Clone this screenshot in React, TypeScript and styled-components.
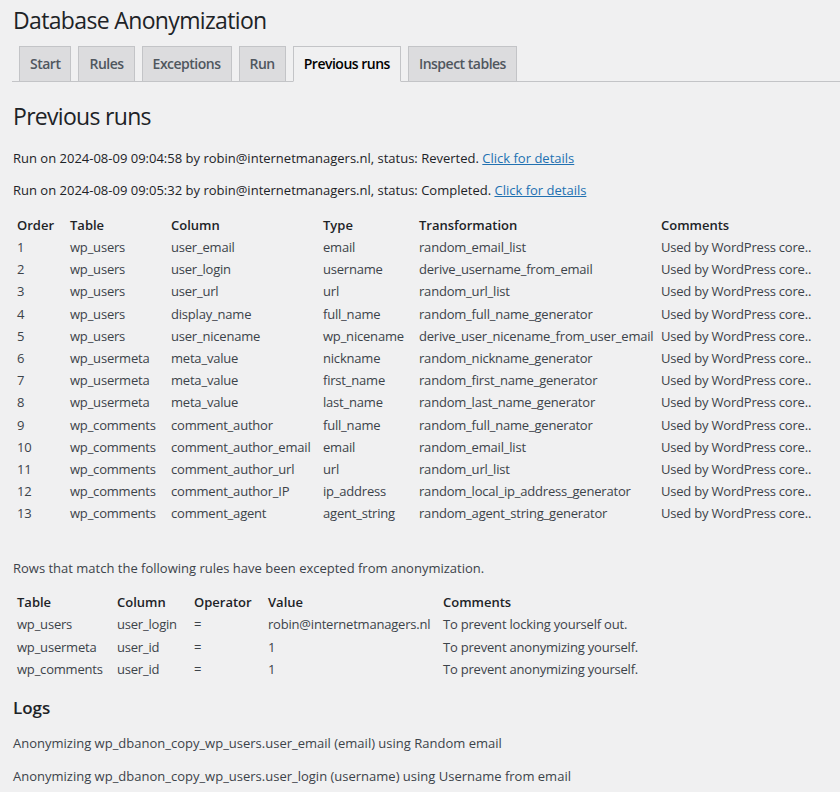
import { createGlobalStyle, styled } from "styled-components";

const GlobalStyle = createGlobalStyle`
  body {
    margin: 0;
    background: #f0f0f1;
    color: #3c434a;
    font-family: "Open Sans", "Noto Sans", sans-serif;
    font-size: 13px;
    line-height: 1.4em;
  }
`;

const Wrap = styled.div`
  padding: 0 0 0 12px;
`;

const Title = styled.h1`
  margin: 0;
  padding: 6px 0 4px 1px;
  font-size: 23px;
  font-weight: 400;
  line-height: 1.3;
  letter-spacing: -0.65px;
  color: #1d2327;
`;

const TabBar = styled.nav`
  display: flex;
  margin-top: 6px;
  border-bottom: 1px solid #c3c4c7;
`;

const Tab = styled.a<{ $active?: boolean }>`
  margin-left: 7px;
  margin-bottom: -1px;
  padding: 5px 10px;
  font-size: 14px;
  font-weight: 600;
  line-height: 1.71428571;
  letter-spacing: -0.5px;
  text-decoration: none;
  border: 1px solid #c3c4c7;
  border-bottom-color: ${(p) => (p.$active ? "#f0f0f1" : "#c3c4c7")};
  background: ${(p) => (p.$active ? "#f0f0f1" : "#dcdcde")};
  color: ${(p) => (p.$active ? "#000" : "#50575e")};
`;

const Content = styled.div`
  padding-left: 1px;
`;

const SectionTitle = styled.h2`
  margin: 20px 0 17px;
  font-size: 23px;
  font-weight: 400;
  line-height: 1.3;
  letter-spacing: -0.7px;
  color: #1d2327;
`;

const Para = styled.p<{ $dark?: boolean }>`
  margin: 13px 0;
  line-height: 1.5;
  color: ${(p) => (p.$dark ? "#1d2327" : "#3c434a")};
`;

const Link = styled.a`
  color: #2271b1;
  text-decoration: underline;
`;

const Table = styled.table<{ $gap?: number }>`
  border-spacing: 2px;
  margin-top: -1px;
  margin-left: 1px;
  margin-bottom: ${(p) => p.$gap ?? 0}px;
`;

const Th = styled.th<{ $w?: number }>`
  padding: 1px;
  text-align: left;
  font-weight: 600;
  color: #1d2327;
  width: ${(p) => (p.$w ? `${p.$w}px` : "auto")};
`;

const Td = styled.td`
  padding: 1px;
  white-space: nowrap;
  letter-spacing: -0.2px;
`;

const SubTitle = styled.h3`
  margin: 16px 0 15px;
  font-size: 17px;
  font-weight: 600;
  line-height: 1.3;
  color: #1d2327;
`;

const tabs = ["Start", "Rules", "Exceptions", "Run", "Previous runs", "Inspect tables"];

const runs = [
  { at: "2024-08-09 09:04:58", status: "Reverted" },
  { at: "2024-08-09 09:05:32", status: "Completed" },
];

const rules = [
  ["wp_users", "user_email", "email", "random_email_list"],
  ["wp_users", "user_login", "username", "derive_username_from_email"],
  ["wp_users", "user_url", "url", "random_url_list"],
  ["wp_users", "display_name", "full_name", "random_full_name_generator"],
  ["wp_users", "user_nicename", "wp_nicename", "derive_user_nicename_from_user_email"],
  ["wp_usermeta", "meta_value", "nickname", "random_nickname_generator"],
  ["wp_usermeta", "meta_value", "first_name", "random_first_name_generator"],
  ["wp_usermeta", "meta_value", "last_name", "random_last_name_generator"],
  ["wp_comments", "comment_author", "full_name", "random_full_name_generator"],
  ["wp_comments", "comment_author_email", "email", "random_email_list"],
  ["wp_comments", "comment_author_url", "url", "random_url_list"],
  ["wp_comments", "comment_author_IP", "ip_address", "random_local_ip_address_generator"],
  ["wp_comments", "comment_agent", "agent_string", "random_agent_string_generator"],
];

const exceptions = [
  ["wp_users", "user_login", "=", "robin@internetmanagers.nl", "To prevent locking yourself out."],
  ["wp_usermeta", "user_id", "=", "1", "To prevent anonymizing yourself."],
  ["wp_comments", "user_id", "=", "1", "To prevent anonymizing yourself."],
];

const logs = [
  "Anonymizing wp_dbanon_copy_wp_users.user_email (email) using Random email",
  "Anonymizing wp_dbanon_copy_wp_users.user_login (username) using Username from email",
];

export default function App() {
  return (
    <>
      <GlobalStyle />
      <Wrap>
        <Title>Database Anonymization</Title>
        <TabBar>
          {tabs.map((t) => (
            <Tab key={t} href="#" $active={t === "Previous runs"}>
              {t}
            </Tab>
          ))}
        </TabBar>
        <Content>
          <SectionTitle>Previous runs</SectionTitle>
          {runs.map((r) => (
            <Para key={r.at} $dark>
              Run on {r.at} by robin@internetmanagers.nl, status: {r.status}.{" "}
              <Link href="#">Click for details</Link>
            </Para>
          ))}
          <Table $gap={33}>
            <thead>
              <tr>
                <Th $w={49}>Order</Th>
                <Th $w={97}>Table</Th>
                <Th $w={148}>Column</Th>
                <Th $w={92}>Type</Th>
                <Th $w={238}>Transformation</Th>
                <Th>Comments</Th>
              </tr>
            </thead>
            <tbody>
              {rules.map((r, i) => (
                <tr key={i}>
                  <Td>{i + 1}</Td>
                  {r.map((c, j) => (
                    <Td key={j}>{c}</Td>
                  ))}
                  <Td>Used by WordPress core..</Td>
                </tr>
              ))}
            </tbody>
          </Table>
          <Para>Rows that match the following rules have been excepted from anonymization.</Para>
          <Table>
            <thead>
              <tr>
                <Th $w={96}>Table</Th>
                <Th $w={73}>Column</Th>
                <Th $w={70}>Operator</Th>
                <Th $w={171}>Value</Th>
                <Th>Comments</Th>
              </tr>
            </thead>
            <tbody>
              {exceptions.map((r, i) => (
                <tr key={i}>
                  {r.map((c, j) => (
                    <Td key={j}>{c}</Td>
                  ))}
                </tr>
              ))}
            </tbody>
          </Table>
          <SubTitle>Logs</SubTitle>
          {logs.map((l) => (
            <Para key={l}>{l}</Para>
          ))}
        </Content>
      </Wrap>
    </>
  );
}
